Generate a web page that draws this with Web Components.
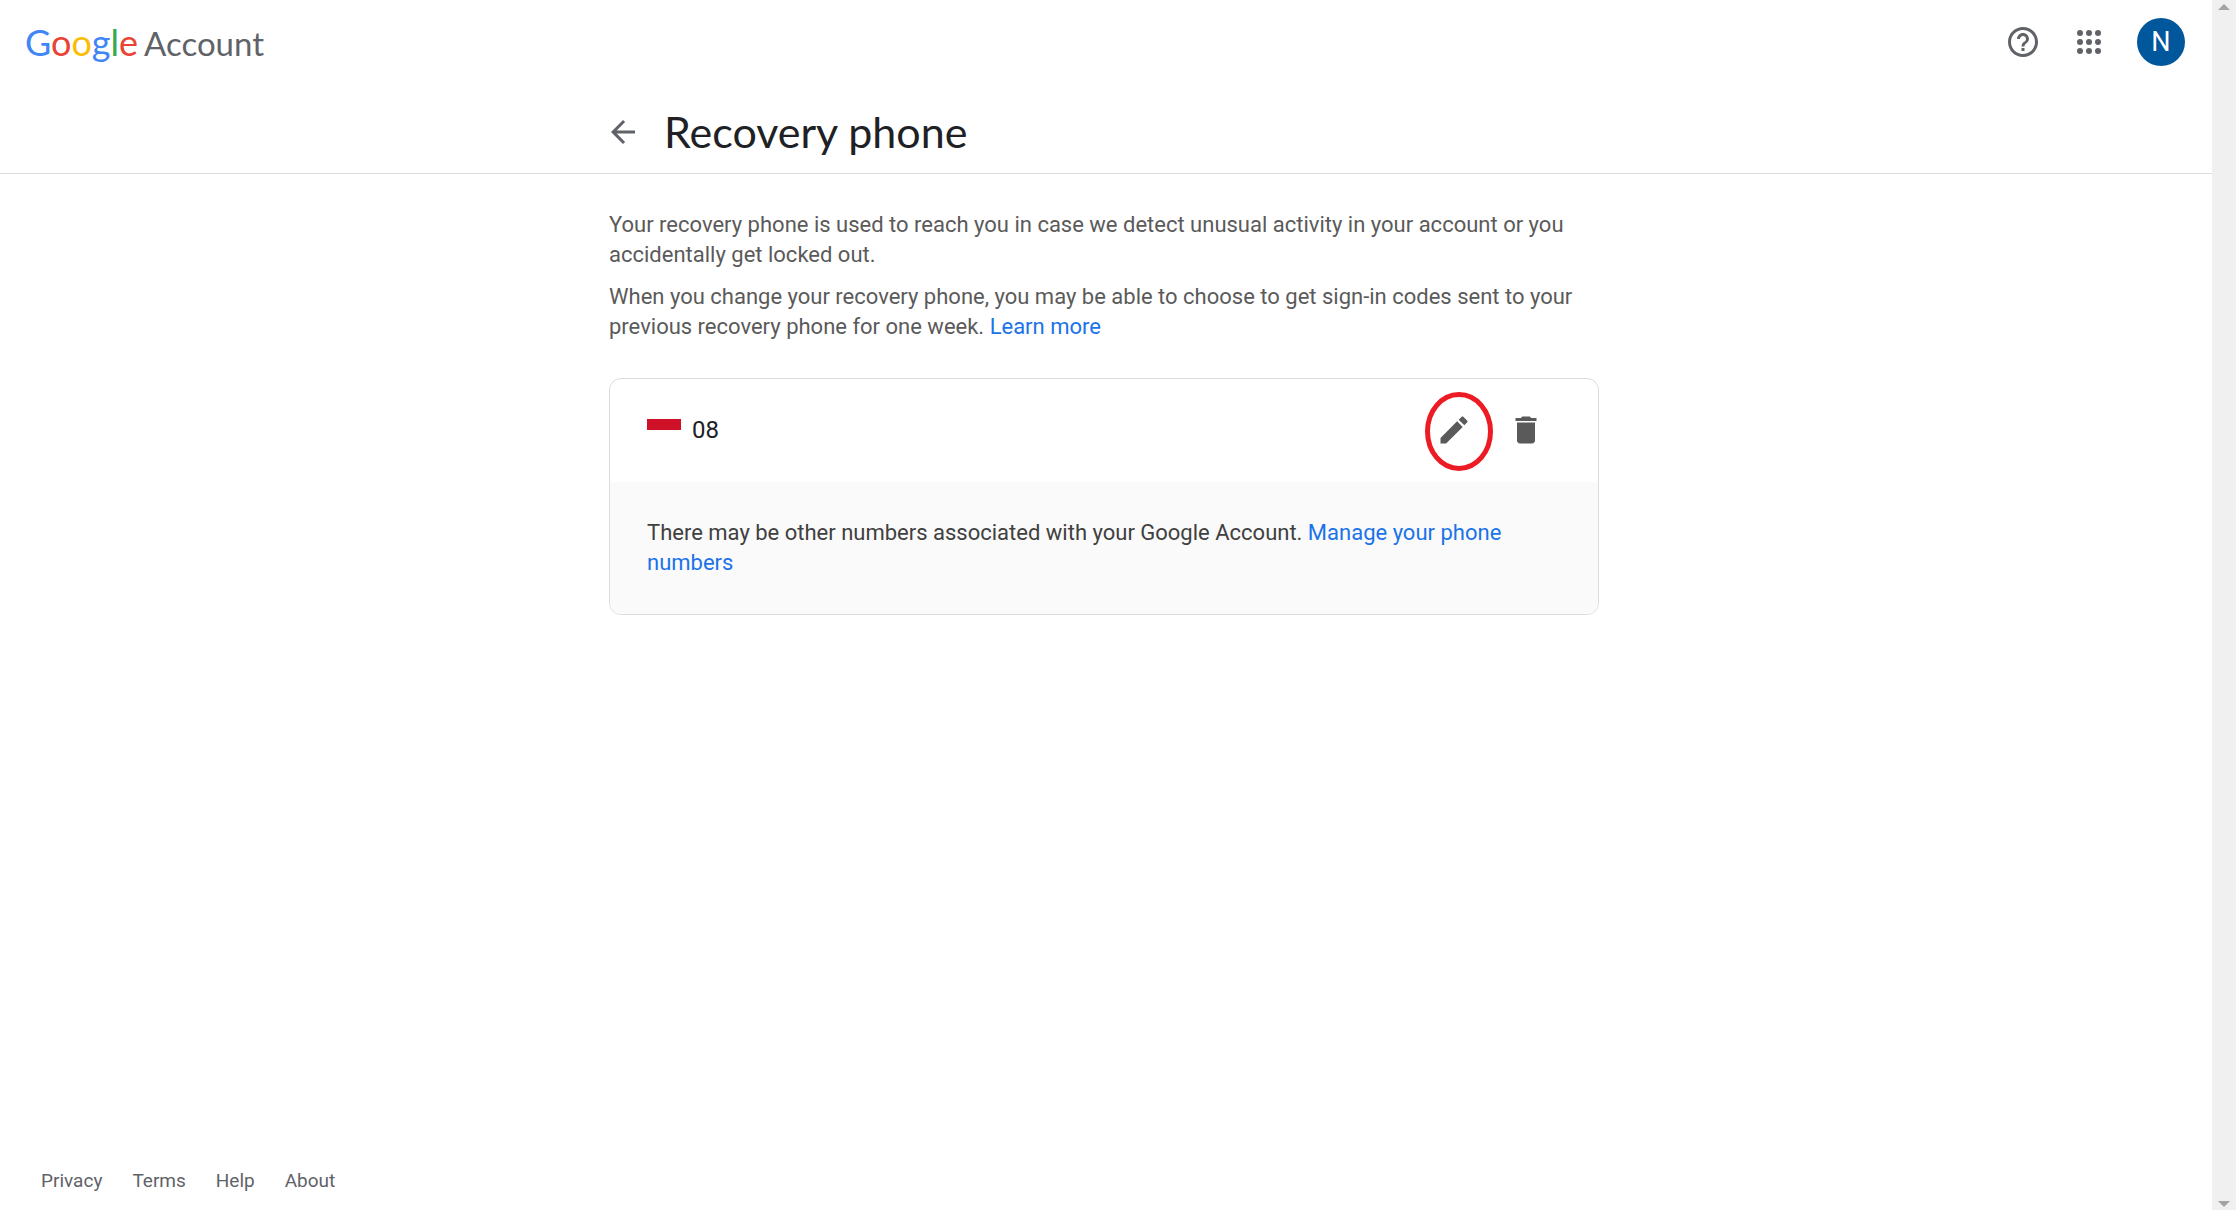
<!DOCTYPE html>
<html lang="en">
<head>
<meta charset="utf-8">
<title>Recovery phone</title>
<style>
  :root {
    --grey: #5f6368;
    --ink: #202124;
    --blue: #1a73e8;
    --line: #dadce0;
  }
  html, body {
    margin: 0;
    background: #fff;
  }
  body {
    font-family: Roboto, "Liberation Sans", sans-serif;
    color: var(--grey);
  }
</style>
</head>
<body>
<account-page>
  <account-header slot="header"></account-header>
  <page-title slot="title">Recovery phone</page-title>
  <recovery-intro></recovery-intro>
  <phone-card>08</phone-card>
  <page-footer slot="footer"></page-footer>
</account-page>

<script>
function define(name, html) {
  const template = document.createElement("template");
  template.innerHTML = html;

  window.customElements.define(name, class extends HTMLElement {
    constructor() {
      super();
      const shadow = this.attachShadow({ mode: "open" });
      shadow.appendChild(template.content.cloneNode(true));
    }
  });
}

define("account-page", `
<style>
  :host {
    display: flex;
    min-height: 100vh;
  }
  .page {
    flex: 1;
    display: flex;
    flex-direction: column;
    min-width: 0;
  }
  main {
    flex: 1;
    box-sizing: border-box;
    width: 100%;
    max-width: 994px;
    margin: 0 auto;
    padding: 36px 4px 36px 0;
  }
</style>
<div class="page">
  <slot name="header"></slot>
  <slot name="title"></slot>
  <main><slot></slot></main>
  <slot name="footer"></slot>
</div>
<scroll-track></scroll-track>
`);

define("scroll-track", `
<style>
  :host {
    display: flex;
    flex-direction: column;
    justify-content: space-between;
    align-items: center;
    box-sizing: border-box;
    width: 24px;
    padding: 4px 0 3px;
    background: #f0f0f0;
  }
  svg {
    display: block;
    fill: #a3a3a3;
  }
</style>
<svg width="12" height="6" viewBox="0 0 12 6"><path d="M6 0l6 6H0z"/></svg>
<svg width="12" height="6" viewBox="0 0 12 6"><path d="M0 0h12L6 6z"/></svg>
`);

define("account-header", `
<style>
  :host {
    display: flex;
    align-items: center;
    justify-content: space-between;
    height: 84px;
    padding: 0 27px 0 25px;
  }
  .logo {
    display: flex;
    align-items: baseline;
    gap: 6px;
    font-family: Lato, "Liberation Sans", sans-serif;
    font-size: 33px;
    line-height: 48px;
    color: var(--grey);
    text-decoration: none;
  }
  .google {
    font-size: 36px;
  }
  .b { color: #4285f4; }
  .r { color: #ea4335; }
  .y { color: #fbbc05; }
  .g { color: #34a853; }
  .tools {
    display: flex;
    align-items: center;
    gap: 6px;
  }
  button {
    display: flex;
    align-items: center;
    justify-content: center;
    width: 60px;
    height: 60px;
    padding: 0;
    border: 0;
    border-radius: 50%;
    background: none;
    color: var(--grey);
  }
  svg {
    fill: currentColor;
  }
  .avatar {
    width: 48px;
    height: 48px;
    margin-left: 12px;
    background: #01579b;
    color: #fff;
    font: 27px Roboto, sans-serif;
  }
</style>
<a class="logo" href="#">
  <span class="google"><span class="b">G</span><span class="r">o</span><span class="y">o</span><span class="b">g</span><span class="g">l</span><span class="r">e</span></span>
  <span>Account</span>
</a>
<div class="tools">
  <button aria-label="Help">
    <svg width="36" height="36" viewBox="0 0 24 24"><path d="M11 18h2v-2h-2v2zm1-16C6.480 2 2 6.480 2 12s4.480 10 10 10 10-4.480 10-10S17.520 2 12 2zm0 18c-4.410 0-8-3.590-8-8s3.590-8 8-8 8 3.590 8 8-3.590 8-8 8zm0-14c-2.210 0-4 1.790-4 4h2c0-1.100.9-2 2-2s2 .9 2 2c0 2-3 1.750-3 5h2c0-2.250 3-2.500 3-5 0-2.210-1.790-4-4-4z"/></svg>
  </button>
  <button aria-label="Google apps">
    <svg width="36" height="36" viewBox="0 0 24 24"><circle cx="6" cy="6" r="2"/><circle cx="12" cy="6" r="2"/><circle cx="18" cy="6" r="2"/><circle cx="6" cy="12" r="2"/><circle cx="12" cy="12" r="2"/><circle cx="18" cy="12" r="2"/><circle cx="6" cy="18" r="2"/><circle cx="12" cy="18" r="2"/><circle cx="18" cy="18" r="2"/></svg>
  </button>
  <button class="avatar" aria-label="Account: N">N</button>
</div>
`);

define("page-title", `
<style>
  :host {
    display: block;
    border-bottom: 1px solid var(--line);
  }
  .row {
    display: flex;
    align-items: center;
    gap: 27px;
    box-sizing: border-box;
    max-width: 994px;
    margin: 0 auto;
    padding: 18px 4px 11px 0;
  }
  button {
    display: flex;
    justify-content: center;
    width: 28px;
    padding: 0;
    border: 0;
    background: none;
    color: var(--grey);
  }
  svg {
    flex: none;
    fill: currentColor;
  }
  h1 {
    margin: 0;
    font: 400 43px/60px Lato, "Liberation Sans", sans-serif;
    color: var(--ink);
  }
</style>
<div class="row">
  <button aria-label="Back">
    <svg width="36" height="36" viewBox="0 0 24 24"><path d="M20 11H7.830l5.590-5.590L12 4l-8 8 8 8 1.410-1.410L7.830 13H20v-2z"/></svg>
  </button>
  <h1><slot></slot></h1>
</div>
`);

define("recovery-intro", `
<style>
  :host {
    display: block;
    margin-bottom: 36px;
    font-size: 22px;
    line-height: 30px;
    color: #5a5a5a;
  }
  p {
    margin: 0 0 12px;
  }
  a {
    color: var(--blue);
    text-decoration: none;
  }
</style>
<p>Your recovery phone is used to reach you in case we detect unusual activity in your account or you accidentally get locked out.</p>
<p>When you change your recovery phone, you may be able to choose to get sign-in codes sent to your previous recovery phone for one week. <a href="#">Learn more</a></p>
`);

define("phone-card", `
<style>
  :host {
    display: block;
    overflow: hidden;
    border: 1px solid var(--line);
    border-radius: 12px;
    line-height: 30px;
  }
  .phone {
    display: flex;
    align-items: center;
    padding: 15px 36px 16px 37px;
  }
  .number {
    flex: 1;
    margin-left: 11px;
    font-size: 24px;
    color: var(--ink);
  }
  button {
    position: relative;
    display: flex;
    align-items: center;
    justify-content: center;
    width: 72px;
    height: 72px;
    padding: 0;
    border: 0;
    background: none;
    color: #5a5a5a;
  }
  svg {
    display: block;
    fill: currentColor;
  }
  /* hand-drawn ring over the edit button */
  .ring {
    position: absolute;
    left: 7px;
    top: -2px;
    fill: none;
    stroke: #ed1c24;
    stroke-width: 5;
  }
  .note {
    margin: 0;
    padding: 36px 37px;
    background: #fafafa;
    font-size: 22px;
    color: #404040;
  }
  a {
    color: var(--blue);
    text-decoration: none;
  }
</style>
<div class="phone">
  <svg width="34" height="23" viewBox="0 0 34 23" role="img" aria-label="Indonesia"><path fill="#fff" d="M0 0h34v23H0z"/><path fill="#ce1126" d="M0 0h34v11H0z"/></svg>
  <span class="number"><slot></slot></span>
  <button aria-label="Edit">
    <svg width="36" height="36" viewBox="0 0 24 24"><path d="M3 17.250V21h3.750L17.810 9.940l-3.750-3.750L3 17.250zM20.710 7.040c.39-.39.39-1.020 0-1.410l-2.340-2.340c-.39-.39-1.020-.39-1.410 0l-1.830 1.830 3.750 3.750 1.830-1.830z"/></svg>
    <svg class="ring" width="68" height="79" viewBox="0 0 68 79"><ellipse cx="34" cy="39.500" rx="31.500" ry="37"/></svg>
  </button>
  <button aria-label="Delete">
    <svg width="36" height="36" viewBox="0 0 24 24"><path d="M6 19c0 1.100.9 2 2 2h8c1.100 0 2-.9 2-2V7H6v12zM19 4h-3.500l-1-1h-5l-1 1H5v2h14V4z"/></svg>
  </button>
</div>
<p class="note">There may be other numbers associated with your Google Account. <a href="#">Manage your phone numbers</a></p>
`);

define("page-footer", `
<style>
  :host {
    display: block;
    padding: 0 41px 17px;
  }
  nav {
    display: flex;
    gap: 30px;
    font-size: 19px;
    line-height: 24px;
  }
  a {
    color: var(--grey);
    text-decoration: none;
  }
</style>
<nav>
  <a href="#">Privacy</a>
  <a href="#">Terms</a>
  <a href="#">Help</a>
  <a href="#">About</a>
</nav>
`);
</script>
</body>
</html>
